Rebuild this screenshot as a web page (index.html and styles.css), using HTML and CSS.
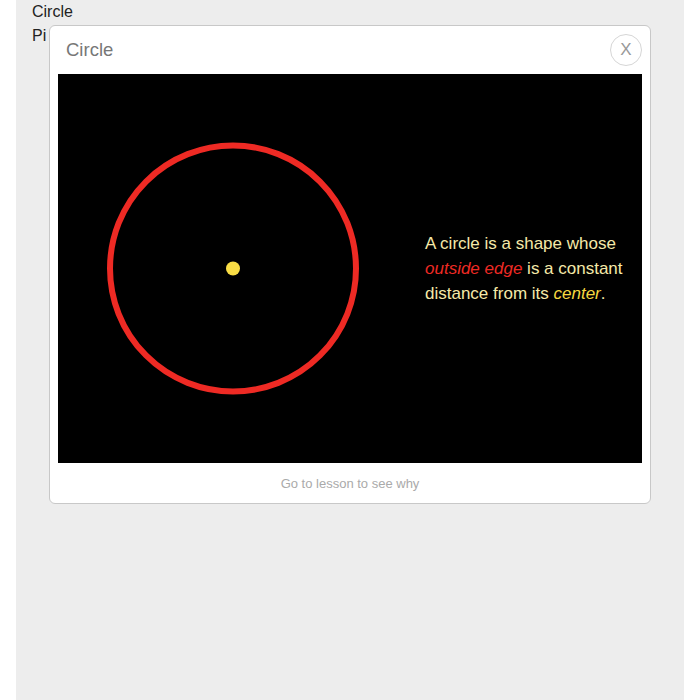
FILE: index.html
```html
<!DOCTYPE html>
<html>
<head>
<meta charset="utf-8">
<link rel="stylesheet" href="styles.css">
</head>
<body>
<div class="page">
  <div class="list">
    <div class="item">Circle</div>
    <div class="item">Pi</div>
  </div>
  <div class="modal">
    <div class="modal-head">
      <div class="modal-title">Circle</div>
      <div class="close">X</div>
    </div>
    <div class="stage">
      <svg class="figure" width="350" height="389" viewBox="0 0 350 389">
        <circle cx="175" cy="194.5" r="123" fill="none" stroke="#ee2a24" stroke-width="6"/>
        <circle cx="175" cy="194.5" r="7" fill="#f9dd45"/>
      </svg>
      <p class="desc">A circle is a shape whose <em class="red">outside edge</em> is a constant distance from its <em class="yel">center</em>.</p>
    </div>
    <div class="modal-foot">Go to lesson to see why</div>
  </div>
</div>
</body>
</html>
```
FILE: styles.css
```css
html, body {
  margin: 0;
  padding: 0;
  background: #fff;
}
body {
  font-family: "Liberation Sans", Arial, sans-serif;
}
.page {
  position: relative;
  margin: 0 16px;
  min-height: 700px;
  background: #ededed;
  padding-left: 16px;
  box-sizing: border-box;
}
.item {
  font-size: 16px;
  line-height: 24px;
  color: #222;
}
.modal {
  position: absolute;
  left: 33px;
  top: 25px;
  width: 602px;
  box-sizing: border-box;
  background: #fff;
  border: 1px solid #c8c8c8;
  border-radius: 6px;
  padding: 0 8px;
}
.modal-head {
  height: 48px;
  display: flex;
  align-items: center;
  justify-content: space-between;
  padding-left: 8px;
}
.modal-title {
  font-size: 18.5px;
  color: #777;
}
.close {
  width: 30px;
  height: 30px;
  border: 1px solid #d6d6d6;
  border-radius: 50%;
  display: flex;
  align-items: center;
  justify-content: center;
  font-size: 17px;
  color: #999;
}
.stage {
  background: #000;
  height: 389px;
  display: flex;
  align-items: center;
}
.figure {
  display: block;
  flex: none;
}
.desc {
  margin: 0 0 0 17px;
  width: 210px;
  font-size: 17px;
  line-height: 25px;
  color: #f5e9a8;
}
.desc em {
  font-style: italic;
}
.red { color: #ee2a24; }
.yel { color: #f7d940; }
.modal-foot {
  height: 40px;
  display: flex;
  align-items: center;
  justify-content: center;
  font-size: 13px;
  color: #aaa;
}
```
